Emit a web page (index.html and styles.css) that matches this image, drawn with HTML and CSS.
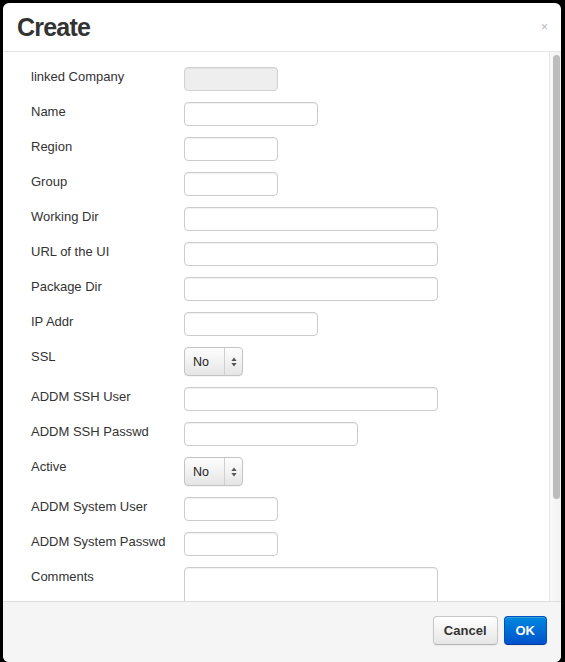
FILE: index.html
```html
<!DOCTYPE html>
<html>
<head>
<meta charset="utf-8">
<title>Create</title>
<link rel="stylesheet" href="styles.css">
</head>
<body>
<div class="modal">
  <div class="modal-header">
    <h3 class="modal-title">Create</h3>
    <span class="close">×</span>
  </div>
  <div class="modal-body">
    <div class="body-content">
      <form class="form">
        <div class="row"><label class="label">linked Company</label><input class="input w-s" type="text" disabled></div>
        <div class="row"><label class="label">Name</label><input class="input w-m" type="text"></div>
        <div class="row"><label class="label">Region</label><input class="input w-s" type="text"></div>
        <div class="row"><label class="label">Group</label><input class="input w-s" type="text"></div>
        <div class="row"><label class="label">Working Dir</label><input class="input w-l" type="text"></div>
        <div class="row"><label class="label">URL of the UI</label><input class="input w-l" type="text"></div>
        <div class="row"><label class="label">Package Dir</label><input class="input w-l" type="text"></div>
        <div class="row"><label class="label">IP Addr</label><input class="input w-m" type="text"></div>
        <div class="row"><label class="label">SSL</label>
          <div class="select"><span class="select-value">No</span><span class="select-arrows"><svg width="6" height="10" viewBox="0 0 6 10"><path d="M3 0.5 L5.6 4 L0.4 4 Z M3 9.5 L5.6 6 L0.4 6 Z" fill="#555"/></svg></span></div>
        </div>
        <div class="row"><label class="label">ADDM SSH User</label><input class="input w-l" type="text"></div>
        <div class="row"><label class="label">ADDM SSH Passwd</label><input class="input w-xm" type="password"></div>
        <div class="row"><label class="label">Active</label>
          <div class="select"><span class="select-value">No</span><span class="select-arrows"><svg width="6" height="10" viewBox="0 0 6 10"><path d="M3 0.5 L5.6 4 L0.4 4 Z M3 9.5 L5.6 6 L0.4 6 Z" fill="#555"/></svg></span></div>
        </div>
        <div class="row"><label class="label">ADDM System User</label><input class="input w-s" type="text"></div>
        <div class="row"><label class="label">ADDM System Passwd</label><input class="input w-s" type="password"></div>
        <div class="row"><label class="label">Comments</label><textarea class="textarea w-l"></textarea></div>
      </form>
    </div>
    <div class="scrollbar"><div class="scroll-thumb"></div></div>
  </div>
  <div class="modal-footer">
    <button class="btn" type="button">Cancel</button>
    <button class="btn btn-primary" type="button">OK</button>
  </div>
</div>
</body>
</html>
```

FILE: styles.css
```css
html, body {
  margin: 0;
  padding: 0;
  height: 100%;
}
body {
  background: #000;
  font-family: "Liberation Sans", Arial, Helvetica, sans-serif;
  font-size: 13px;
  color: #333;
  padding: 3px 4px 0 3px;
  box-sizing: border-box;
  overflow: hidden;
}
.modal {
  width: 558px;
  height: 659px;
  background: #fff;
  border-radius: 6px;
  display: flex;
  flex-direction: column;
  overflow: hidden;
}
.modal-header {
  height: 48px;
  flex: none;
  border-bottom: 1px solid #e5e5e5;
  display: flex;
  justify-content: space-between;
  align-items: flex-start;
  padding: 0 13px 0 14px;
  box-sizing: content-box;
}
.modal-title {
  margin: 0;
  font-size: 25px;
  font-weight: bold;
  letter-spacing: -0.8px;
  line-height: 29px;
  padding-top: 10px;
  color: #333;
}
.close {
  font-size: 12px;
  color: #b8b8b8;
  line-height: 14px;
  margin-top: 17px;
}
.modal-body {
  flex: none;
  height: 549px;
  display: flex;
  overflow: hidden;
}
.body-content {
  flex: 1;
  overflow: hidden;
}
.scrollbar {
  flex: none;
  width: 12px;
  border-left: 1px solid #e6e6e6;
  background: linear-gradient(to right, #f9f9f9 0%, #f2f2f2 100%);
  padding: 3px 1px 0 3px;
  box-sizing: border-box;
}
.scroll-thumb {
  height: 444px;
  background: #bcbcbc;
  border-radius: 4px;
}
.form {
  padding: 15px 0 40px 28px;
}
.row {
  display: grid;
  grid-template-columns: 153px auto;
  justify-items: start;
  margin-bottom: 11px;
}
.label {
  line-height: 16px;
  padding-top: 2px;
  color: #333;
}
.input, .textarea {
  box-sizing: border-box;
  height: 24px;
  border: 1px solid #ccc;
  border-radius: 4px;
  background: #fff;
  box-shadow: inset 0 1px 1px rgba(0,0,0,0.06);
  margin: 0;
  padding: 2px 6px;
  font-family: inherit;
  font-size: 13px;
  outline: none;
}
.input[disabled] {
  background: #eee;
  border-color: #d2d2d2;
}
.textarea {
  height: 64px;
  resize: none;
}
.w-s { width: 94px; }
.w-m { width: 134px; }
.w-xm { width: 174px; }
.w-l { width: 254px; }
.select {
  box-sizing: border-box;
  width: 59px;
  height: 29px;
  border: 1px solid #c4c4c4;
  border-radius: 4px;
  background: linear-gradient(to bottom, #fdfdfd 0%, #f1f1f1 55%, #e4e4e4 100%);
  box-shadow: 0 1px 0 rgba(0,0,0,0.04);
  display: flex;
  align-items: stretch;
}
.select-value {
  flex: 1;
  display: flex;
  align-items: center;
  padding-left: 8px;
  font-size: 12.5px;
  color: #222;
}
.select-arrows {
  width: 17px;
  border-left: 1px solid #d0d0d0;
  display: flex;
  align-items: center;
  justify-content: center;
}
.modal-footer {
  flex: 1;
  background: #f5f5f5;
  border-top: 1px solid #ddd;
  display: flex;
  justify-content: flex-end;
  align-items: flex-start;
  gap: 6px;
  padding: 14px 14px 0 0;
}
.btn {
  height: 29px;
  padding: 0 10px;
  font-family: inherit;
  font-size: 13px;
  font-weight: bold;
  color: #333;
  border: 1px solid #c8c8c8;
  border-bottom-color: #b3b3b3;
  border-radius: 4px;
  background: linear-gradient(to bottom, #ffffff 0%, #e6e6e6 100%);
  box-shadow: inset 0 1px 0 rgba(255,255,255,0.2), 0 1px 2px rgba(0,0,0,0.05);
  margin: 0;
}
.btn-primary {
  padding: 0 11px;
  color: #fff;
  border-color: #0050c0;
  border-bottom-color: #003a9a;
  background: linear-gradient(to bottom, #0088dd 0%, #0052cc 100%);
}
```
